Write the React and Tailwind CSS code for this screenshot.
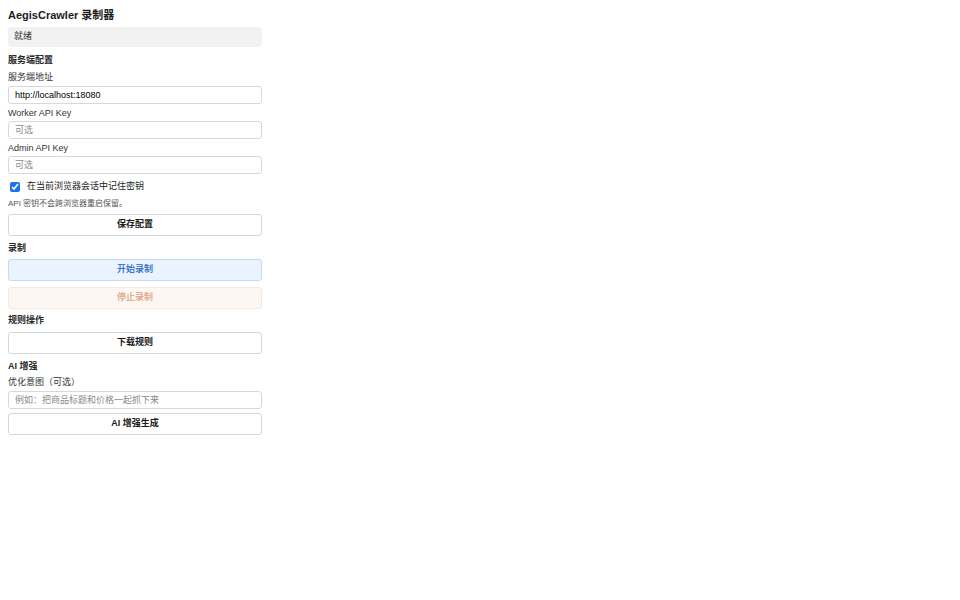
import { useState } from 'react'

const font = { fontFamily: '"Liberation Sans", "Noto Sans CJK SC", sans-serif' }

function Heading({ children, className = '' }) {
  return <div className={`h-[12px] leading-[12px] text-[9px] font-bold text-[#2a2a2a] ${className}`}>{children}</div>
}

function Label({ children, className = '' }) {
  return <div className={`h-[12px] leading-[12px] text-[9px] text-[#333] ${className}`}>{children}</div>
}

function Field({ value, placeholder, className = '' }) {
  return (
    <input
      defaultValue={value}
      placeholder={placeholder}
      className={`h-[18px] w-full rounded-[3px] border border-[#d5d9df] bg-white px-[6px] text-[9px] text-black placeholder:text-[#8a8a8a] outline-none ${className}`}
      style={font}
    />
  )
}

function Btn({ children, className = '', tone = 'default' }) {
  const tones = {
    default: 'border-[#d3d7dc] bg-white text-[#1a1a1a] font-bold',
    blue: 'border-[#c6daf3] bg-[#eaf3fe] text-[#1a62c4] font-medium',
    stop: 'border-[#f6e8df] bg-[#fdf7f3] text-[#dd9d7c] font-medium',
  }
  return (
    <button
      className={`h-[22px] w-full rounded-[3px] border text-[9px] ${tones[tone]} ${className}`}
      style={font}
    >
      {children}
    </button>
  )
}

export default function App() {
  const [remember, setRemember] = useState(true)

  return (
    <div className="min-h-screen bg-white" style={font}>
      <div className="ml-[8px] flex w-[254px] flex-col pt-[8px]">
        <div className="h-[14px] leading-[14px] text-[11px] font-bold text-[#1c1c1c]">AegisCrawler 录制器</div>

        <div className="mt-[5px] flex h-[20px] items-center rounded-[4px] bg-[#f2f2f2] px-[6px] text-[9px] text-[#333]">
          就绪
        </div>

        <Heading className="mt-[7px]">服务端配置</Heading>
        <Label className="mt-[5px]">服务端地址</Label>
        <Field value="http://localhost:18080" className="mt-[3px]" />
        <Label className="mt-[3px]">Worker API Key</Label>
        <Field placeholder="可选" className="mt-[2px]" />
        <Label className="mt-[3px]">Admin API Key</Label>
        <Field placeholder="可选" className="mt-[2px]" />

        <label className="mt-[7px] flex h-[12px] items-center gap-[7px] pl-[2px] text-[9px] text-[#222]">
          <input
            type="checkbox"
            checked={remember}
            onChange={e => setRemember(e.target.checked)}
            className="h-[10px] w-[10px] accent-[#1a73e8]"
          />
          <span>在当前浏览器会话中记住密钥</span>
        </label>
        <div className="mt-[5px] h-[12px] leading-[12px] text-[8px] text-[#555]">API 密钥不会跨浏览器重启保留。</div>

        <Btn className="mt-[4px]">保存配置</Btn>

        <Heading className="mt-[6px]">录制</Heading>
        <Btn tone="blue" className="mt-[5px]">开始录制</Btn>
        <Btn tone="stop" className="mt-[6px]">停止录制</Btn>

        <Heading className="mt-[5px]">规则操作</Heading>
        <Btn className="mt-[6px]">下载规则</Btn>

        <Heading className="mt-[6px]">AI 增强</Heading>
        <Label className="mt-[4px]">优化意图（可选）</Label>
        <Field placeholder="例如：把商品标题和价格一起抓下来" className="mt-[3px]" />
        <Btn className="mt-[4px]">AI 增强生成</Btn>
      </div>
    </div>
  )
}
